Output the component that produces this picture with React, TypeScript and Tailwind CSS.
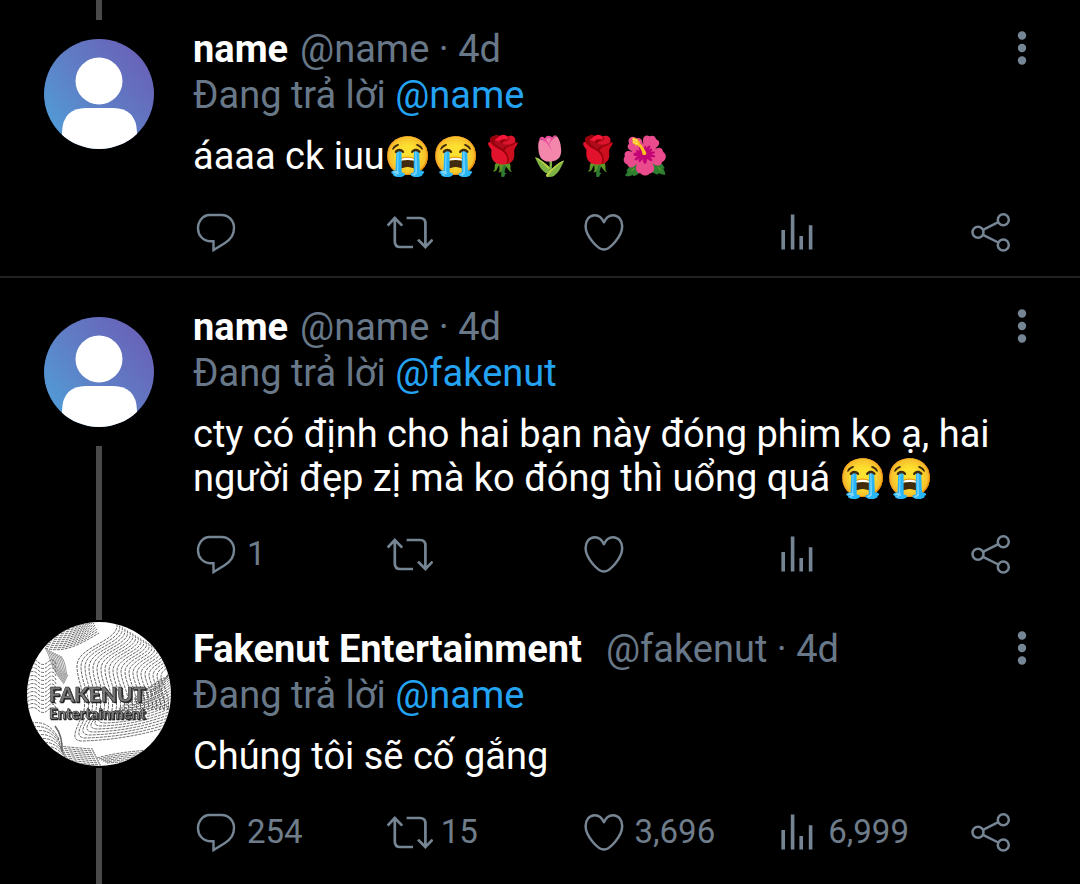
import type { ReactNode } from "react";

const ICON_CLASS = "h-[46px] w-[46px] shrink-0 fill-none stroke-[#768594]";

type Post = {
  id: number;
  name: string;
  handle: string;
  time: string;
  replyTo: string;
  text: string;
  brand?: boolean;
  lineAbove?: boolean;
  lineBelow?: boolean;
  divider?: boolean;
  replies?: string;
  retweets?: string;
  likes?: string;
  views?: string;
};

const POSTS: Post[] = [
  {
    id: 1,
    name: "name",
    handle: "@name",
    time: "4d",
    replyTo: "@name",
    text: "áaaa ck iuu😭😭🌹🌷🌹🌺",
    lineAbove: true,
    divider: true,
  },
  {
    id: 2,
    name: "name",
    handle: "@name",
    time: "4d",
    replyTo: "@fakenut",
    text: "cty có định cho hai bạn này đóng phim ko ạ, hai người đẹp zị mà ko đóng thì uổng quá 😭😭",
    lineBelow: true,
    replies: "1",
  },
  {
    id: 3,
    name: "Fakenut Entertainment",
    handle: "@fakenut",
    time: "4d",
    replyTo: "@name",
    text: "Chúng tôi sẽ cố gắng",
    brand: true,
    lineAbove: true,
    lineBelow: true,
    replies: "254",
    retweets: "15",
    likes: "3,696",
    views: "6,999",
  },
];

function ReplyIcon() {
  return (
    <svg viewBox="0 0 46 46" className={ICON_CLASS} strokeWidth="2.4" aria-hidden="true">
      <path d="M16.5 6H28.5C36 6 41 12 41 19C41 25 38 30.2 32 34L20.5 41V32.2H17C10 32 5 26.2 5 19.4C5 12 10 6 16.5 6Z" />
    </svg>
  );
}

function RetweetIcon() {
  return (
    <svg viewBox="0 0 46 46" className={ICON_CLASS} strokeWidth="2.7" aria-hidden="true">
      <path d="M0.6 16.6L7.8 9L15.2 16.6M7.8 9V32.5Q7.8 38 13.2 38H26" />
      <path d="M19.6 9H33Q38.4 9 38.4 14.5V38M31 30.6L38.4 38L45.6 30.6" />
    </svg>
  );
}

function HeartIcon() {
  return (
    <svg viewBox="0 0 46 46" className={ICON_CLASS} strokeWidth="2.5" strokeLinejoin="round" aria-hidden="true">
      <path d="M22.9 13.2C21 8.8 17.6 6.2 13.8 6.2C8.4 6.2 4.6 10.8 4.6 17C4.6 27.4 17.2 40.6 22.9 40.6C28.6 40.6 41.2 27.4 41.2 17C41.2 10.8 37.4 6.2 32 6.2C28.2 6.2 24.8 8.8 22.9 13.2Z" />
    </svg>
  );
}

function ViewsIcon() {
  return (
    <svg viewBox="0 0 46 46" className={ICON_CLASS} strokeWidth="3.6" aria-hidden="true">
      <path d="M9.2 21V40.6M18.6 5.6V40.6M27.2 27V40.6M36.6 16.2V40.6" />
    </svg>
  );
}

function ShareIcon() {
  return (
    <svg viewBox="0 0 46 46" className={ICON_CLASS} strokeWidth="2.5" aria-hidden="true">
      <circle cx="10" cy="23.3" r="5.5" />
      <circle cx="35.3" cy="10.7" r="5.5" />
      <circle cx="35.3" cy="36" r="5.5" />
      <path d="M15 20.8L30.3 13.2M15 25.8L30.3 33.5" />
    </svg>
  );
}

function DefaultAvatar() {
  return (
    <svg viewBox="0 0 110 110" className="h-[110px] w-[110px] shrink-0 rounded-full" aria-hidden="true">
      <defs>
        <linearGradient id="sky" x1="0" y1="0.85" x2="0.85" y2="0.15">
          <stop offset="0" stopColor="#4f9fd8" />
          <stop offset="0.5" stopColor="#5f7fc6" />
          <stop offset="1" stopColor="#6864b9" />
        </linearGradient>
      </defs>
      <rect width="110" height="110" fill="url(#sky)" />
      <circle cx="55" cy="42" r="23.5" fill="#fff" />
      <path d="M18 110V93Q19 69 42 69H69Q92 69 93 93V110Z" fill="#fff" />
    </svg>
  );
}

const range = (n: number) => Array.from({ length: n }, (_, i) => i);

function BrandAvatar() {
  return (
    <svg viewBox="0 0 144 144" className="h-36 w-36 shrink-0 rounded-full" aria-hidden="true">
      <rect width="144" height="144" fill="#fff" />
      <g fill="none" stroke="#444" strokeWidth="0.8" strokeDasharray="3 1">
        {/* long folds on the right */}
        {range(22).map((i) => (
          <path
            key={i}
            d={`M${90 + i * 2.6} ${2 + i * 1.6}C${92 + i * 3} ${20 + i} ${50 + i * 4} ${24 + i} ${50 + i * 4} ${44 + i / 2}C${50 + i * 4} 60 ${60 + i * 4} 74 ${57 + i * 4} 88C${54 + i * 4} ${100 - i} ${40 + i * 4} ${118 - i * 3} ${54 + i * 4} ${119 - i * 3}Q${100 + i * 2} ${118 - i * 3} 144 ${104 - i * 3}`}
          />
        ))}
        {/* top left slope */}
        {range(12).map((i) => (
          <path key={i} d={`M${18 + i} ${26 - i * 2}C${36 + i} ${32 - i * 2} ${54 + i} ${22 - i * 2} ${72 - i} ${11 - i * 2}`} />
        ))}
        {/* left ripples */}
        {range(13).map((i) => (
          <path key={i} d={`M0 ${40 + i * 4}q6 -5 11 0t10 0t8 2`} />
        ))}
        {/* bottom fans */}
        {range(9).map((i) => (
          <path key={i} d={`M${4 + i * 2} ${101 + i * 4}Q${22 + i} ${98 + i * 4} ${32 + i} ${117 + i * 3}`} />
        ))}
        {range(10).map((i) => (
          <path key={i} d={`M${32 + i} ${124 + i * 2}Q${50 + i} ${126 + i * 2} ${66 + i} ${127 + i * 2}`} />
        ))}
        {range(6).map((i) => (
          <path key={i} d={`M${70 + i * 2} ${136 + i}Q${90 + i} ${130 + i * 2} ${124 - i} ${128 + i * 2}`} />
        ))}
      </g>
      <g fill="none" stroke="#666" strokeWidth="0.7">
        {range(9).map((i) => (
          <path key={i} d={`M${18 + i * 2} ${26 + i}C${24 + i * 2} ${34 + i} ${22 + i * 2} ${44 + i} ${37 + i / 2} ${62 - i}`} />
        ))}
        <path d="M28 104Q36 114 35 130" strokeWidth="1.6" />
      </g>
      <g fontFamily="Lato, sans-serif" fontWeight="900" className="drop-shadow-[1px_1px_0_#222]">
        <text x="22" y="80" fontSize="21" fill="#777" stroke="#222" strokeWidth="0.5">FAKENUT</text>
        <text x="22" y="97" fontSize="15" fill="#888" stroke="#222" strokeWidth="0.5">Entertainment</text>
      </g>
    </svg>
  );
}

function Action({ label, count, children }: { label: string; count?: string; children: ReactNode }) {
  return (
    <button type="button" aria-label={label} className="flex flex-1 items-center gap-2">
      {children}
      {count && <span>{count}</span>}
    </button>
  );
}

function Tweet({ post }: { post: Post }) {
  return (
    <article
      className={`flex gap-[22px] border-b-2 pl-[27px] last:grow ${post.divider ? "border-[#1f2123]" : "border-transparent"}`}
    >
      {/* Avatar and thread line */}
      <div className="-mb-0.5 flex w-36 shrink-0 flex-col items-center">
        <div className={`h-5 w-[6px] shrink-0 ${post.lineAbove ? "bg-[#4a4a4a]" : ""}`} />
        <div className={post.brand ? "py-0.5" : "py-[19px]"}>{post.brand ? <BrandAvatar /> : <DefaultAvatar />}</div>
        {post.lineBelow && <div className="w-[6px] grow bg-[#4a4a4a]" />}
      </div>

      <div className="min-w-0 flex-1 pt-[26px] pb-[21px]">
        <header className="flex h-[46px] items-center justify-between pr-12">
          <p className="truncate leading-[46px] text-[#687888]">
            <span className={`font-bold text-white ${post.brand ? "mr-6" : "mr-3"}`}>{post.name}</span>
            {post.handle} · {post.time}
          </p>
          <button type="button" aria-label="More" className="w-5 shrink-0">
            <svg viewBox="0 0 20 46" className="h-[46px] w-5 fill-[#768594]" aria-hidden="true">
              <circle cx="10" cy="9.5" r="4.2" />
              <circle cx="10" cy="22" r="4.2" />
              <circle cx="10" cy="34.5" r="4.2" />
            </svg>
          </button>
        </header>
        <p className="leading-[46px] text-[#687888]">
          Đang trả lời{" "}
          <a href="#profile" className="text-[#25a3f3]">
            {post.replyTo}
          </a>
        </p>
        <p className="mt-4 pr-[66px] leading-[44px] text-white">{post.text}</p>

        <div className="mt-[31px] flex pr-[66px] text-[33px] leading-[46px] text-[#6f7d8b]">
          <Action label="Reply" count={post.replies}>
            <ReplyIcon />
          </Action>
          <Action label="Retweet" count={post.retweets}>
            <RetweetIcon />
          </Action>
          <Action label="Like" count={post.likes}>
            <HeartIcon />
          </Action>
          <Action label="Views" count={post.views}>
            <ViewsIcon />
          </Action>
          <button type="button" aria-label="Share">
            <ShareIcon />
          </button>
        </div>
      </div>
    </article>
  );
}

export default function App() {
  return (
    <main className="flex min-h-screen flex-col bg-black font-[Roboto,'Noto_Color_Emoji',sans-serif] text-[38px]">
      {POSTS.map((post) => (
        <Tweet key={post.id} post={post} />
      ))}
    </main>
  );
}
